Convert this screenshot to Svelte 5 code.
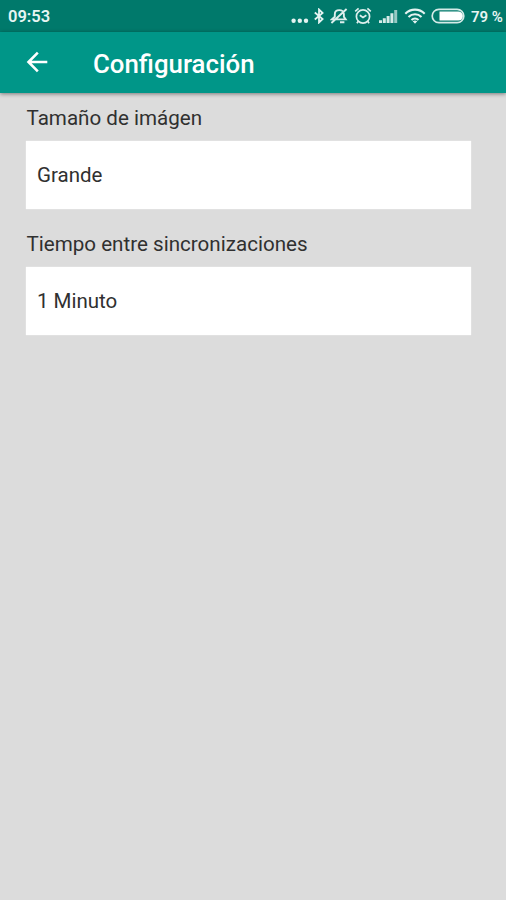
<script lang="ts">
	const time = '09:53';
	const battery = 79;

	const settings = [
		{ label: 'Tamaño de imágen', value: 'Grande' },
		{ label: 'Tiempo entre sincronizaciones', value: '1 Minuto' }
	];
</script>

<div class="screen">
	<div class="status">
		<span class="time">{time}</span>
		<div class="icons">
			<svg class="dots" width="18" height="16" viewBox="0 0 18 16" fill="#e4f3f1">
				<circle cx="2.6" cy="12.7" r="2.2" />
				<circle cx="8.8" cy="12.7" r="2.2" />
				<circle cx="15" cy="12.7" r="2.2" />
			</svg>
			<svg class="bluetooth" width="10" height="16" viewBox="0 0 10 16" fill="none" stroke="#e4f3f1" stroke-width="1.8">
				<path d="M.8 4.5 8.6 11 5 14.5v-13L8.6 5 .8 11.5" />
			</svg>
			<svg class="bell" width="18" height="16" viewBox="0 0 18 16" fill="none" stroke="#dcefed" stroke-width="1.9">
				<path d="M1.8 11.4h13.9l-1.8-2.6V6.2c0-2.6-1.9-4.1-4.6-4.1S4.8 3.6 4.8 6.2v2.6zM10 14.2h4.4M16.6 1 1.4 15" />
			</svg>
			<svg class="alarm" width="18" height="18" viewBox="0 0 18 18" fill="none" stroke="#dcefed" stroke-width="1.7">
				<circle cx="9" cy="9.5" r="6.6" />
				<path d="M1.2 4.3 4.6 1.4M16.8 4.3l-3.4-2.9M5.8 8.2 9 10.5l3.4-2.3M4.3 14.3l-1.4 1.9M13.7 14.3l1.4 1.9" />
			</svg>
			<svg class="signal" width="20" height="14" viewBox="0 0 20 14" fill="#d5ebe8">
				<path d="M1 10.3h3V13H1zM4.8 8.3h3V13h-3zM8.6 6h3v7h-3zM12.4 3.3h3V13h-3z" />
				<path d="M16.2 0h3v13h-3z" opacity=".7" />
			</svg>
			<svg class="wifi" width="22" height="16" viewBox="0 0 22 16" fill="none" stroke="#e4f3f1" stroke-width="2.1">
				<path d="M1.3 5.7c5.5-5.4 13.9-5.4 19.4 0M4.5 8.9c3.7-3.6 9.3-3.6 13 0M7.5 12c2-1.9 5-1.9 7 0" />
				<path d="m8.7 13.3 2.3 2.5 2.3-2.5c-1.3-1.1-3.3-1.1-4.6 0z" fill="#e4f3f1" stroke="none" />
			</svg>
			<svg class="battery" width="34" height="16" viewBox="0 0 34 16">
				<rect x="1.2" y="1.3" width="31.6" height="13.4" rx="6.7" fill="none" stroke="#d5ebe8" stroke-width="1.7" />
				<path d="M8.5 3.4h18.8a4.6 4.6 0 0 1 0 9.2H8.5z" fill="#fff" />
			</svg>
			<span class="percent">{battery} %</span>
		</div>
	</div>

	<header>
		<svg class="back" width="24" height="24" viewBox="0 0 24 24" fill="none" stroke="#fff" stroke-width="2.6">
			<path d="M22.3 12H4M12.8 2.7 3.5 12l9.3 9.3" />
		</svg>
		<h1>Configuración</h1>
	</header>

	<main>
		{#each settings as setting}
			<section>
				<h2>{setting.label}</h2>
				<div class="value">{setting.value}</div>
			</section>
		{/each}
	</main>
</div>

<style>
	.screen {
		display: flex;
		flex-direction: column;
		height: 900px;
		overflow: hidden;
		background: #dcdcdc;
		color: #303030;
		font-family: Roboto, 'Liberation Sans', sans-serif;
	}

	.status {
		display: flex;
		align-items: center;
		justify-content: space-between;
		box-sizing: border-box;
		height: 32px;
		padding: 0 4px 0 8px;
		background: #00796b;
		color: #e8f5f3;
	}

	.time {
		padding-top: 2px;
		font-size: 16.5px;
		font-weight: 600;
		line-height: 20px;
	}

	.icons {
		display: flex;
		align-items: center;
		height: 32px;
	}

	svg {
		display: block;
		flex: none;
	}

	.dots {
		margin-right: 5px;
	}

	.bluetooth {
		margin-right: 6px;
	}

	.bell {
		margin-right: 6px;
	}

	.alarm {
		margin-right: 6px;
	}

	.signal {
		margin: 2px 6px 0 0;
	}

	.wifi {
		margin-right: 5px;
	}

	.battery {
		margin-right: 6px;
	}

	.percent {
		width: 31px;
		padding-top: 2px;
		font-size: 15px;
		font-weight: 600;
		line-height: 18px;
		white-space: nowrap;
	}

	header {
		display: flex;
		align-items: center;
		height: 61px;
		padding-left: 25px;
		background: #009688;
		box-shadow: 0 1px 4px rgba(0, 0, 0, 0.45);
	}

	.back {
		margin-bottom: 1px;
	}

	h1 {
		margin: 2px 0 0 44px;
		color: #fff;
		font-size: 25.8px;
		font-weight: 500;
		line-height: 30px;
	}

	main {
		padding: 12px 35px 0 26px;
	}

	section {
		margin-bottom: 22px;
	}

	h2 {
		margin: 0 0 10px;
		padding-left: 0.5px;
		font-size: 20.6px;
		font-weight: 400;
		line-height: 26px;
	}

	.value {
		box-sizing: border-box;
		height: 68px;
		padding-left: 11px;
		background: #fff;
		box-shadow: 0 0 1px rgba(255, 255, 255, 0.9);
		font-size: 20.5px;
		line-height: 69px;
	}
</style>
